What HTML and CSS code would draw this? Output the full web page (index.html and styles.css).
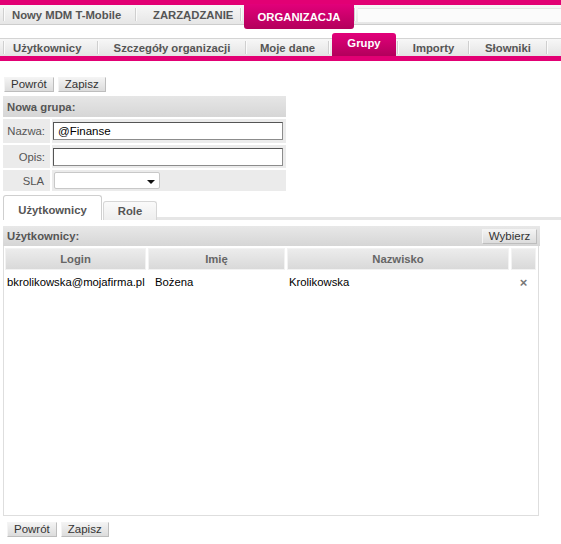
FILE: index.html
```html
<!DOCTYPE html>
<html lang="pl">
<head>
<meta charset="utf-8">
<title>Grupy</title>
<link rel="stylesheet" href="styles.css">
</head>
<body>
<div class="topline"></div>
<nav class="mainnav">
  <span class="sep"></span>
  <a class="mitem m1">Nowy MDM T-Mobile</a>
  <span class="sep"></span>
  <a class="mitem m2">ZARZĄDZANIE</a>
  <span class="sep"></span>
  <a class="mitem active m3">ORGANIZACJA</a>
  <span class="sep"></span>
  <span class="mrest"></span>
</nav>
<nav class="subnav">
  <span class="sep"></span>
  <a class="sitem s1">Użytkownicy</a>
  <span class="sep"></span>
  <a class="sitem s2">Szczegóły organizacji</a>
  <span class="sep"></span>
  <a class="sitem s3">Moje dane</a>
  <span class="sep"></span>
  <a class="sitem active s4">Grupy</a>
  <span class="sep"></span>
  <a class="sitem s5">Importy</a>
  <span class="sep"></span>
  <a class="sitem s6">Słowniki</a>
  <span class="sep"></span>
</nav>
<div class="pinkband"></div>

<main class="content">
  <div class="toolbar">
    <button class="btn">Powrót</button>
    <button class="btn">Zapisz</button>
  </div>

  <div class="form">
    <div class="form-head">Nowa grupa:</div>
    <div class="lbl">Nazwa:</div>
    <div class="fld"><input class="txt" type="text" value="@Finanse"></div>
    <div class="lbl">Opis:</div>
    <div class="fld"><input class="txt" type="text" value=""></div>
    <div class="lbl lbl-sla">SLA</div>
    <div class="fld fld-sla"><span class="select"><span class="arrow"></span></span></div>
  </div>

  <div class="tabs">
    <span class="tab tab-active">Użytkownicy</span>
    <span class="tab">Role</span>
    <span class="tabline"></span>
  </div>

  <div class="users">
    <div class="users-head">
      <span>Użytkownicy:</span>
      <button class="btn btn-small">Wybierz</button>
    </div>
    <div class="grid-box">
      <table class="grid">
        <thead>
          <tr>
            <th class="c-login">Login</th>
            <th class="c-imie">Imię</th>
            <th class="c-nazw">Nazwisko</th>
            <th class="c-x"></th>
          </tr>
        </thead>
        <tbody>
          <tr>
            <td>bkrolikowska@mojafirma.pl</td>
            <td class="pad-imie">Bożena</td>
            <td>Krolikowska</td>
            <td class="del">×</td>
          </tr>
        </tbody>
      </table>
    </div>
  </div>

  <div class="toolbar toolbar-bottom">
    <button class="btn">Powrót</button>
    <button class="btn">Zapisz</button>
  </div>
</main>
</body>
</html>
```

FILE: styles.css
```css
* { box-sizing: border-box; }
html, body { margin: 0; padding: 0; background: #fff; }
body {
  font-family: "Liberation Sans", Arial, sans-serif;
  font-size: 11.3px;
  color: #000;
  width: 561px;
  overflow: hidden;
}

.topline { height: 5px; background: #e20074; }

.sep {
  flex: none;
  width: 2px;
  height: 13px;
  border-left: 1px solid #cfcfcf;
  border-right: 1px solid #fbfbfb;
}

.mainnav {
  display: flex;
  align-items: center;
  height: 20px;
  padding-left: 3px;
  background: linear-gradient(#f7f7f7, #e6e6e6);
  border-bottom: 1px solid #cdcdcd;
}
.mitem {
  display: flex;
  align-items: center;
  justify-content: center;
  height: 19px;
  font-weight: bold;
  color: #555;
  white-space: nowrap;
}
.m1 { width: 130px; justify-content: flex-start; padding-left: 7px; }
.m2 { width: 103px; justify-content: flex-start; padding-left: 16px; }
.m3 { width: 110px; }
.mainnav .active {
  align-self: flex-start;
  height: 25px;
  margin-top: -1px;
  margin-left: 2px;
  background: linear-gradient(#e2007a, #b3005c);
  color: #fff;
  border-radius: 0 0 3px 3px;
  padding-top: 1px;
}
.mrest {
  flex: 1;
  height: 14px;
  margin-left: 2px;
  background: #fbfbfb;
  border-top: 1px solid #e6e6e6;
}

.subnav {
  display: flex;
  align-items: center;
  height: 18px;
  margin-top: 13px;
  padding-left: 3px;
  background: linear-gradient(#f7f7f7, #e4e4e4);
  border-top: 1px solid #d4d4d4;
}
.sitem {
  display: flex;
  align-items: center;
  justify-content: center;
  height: 17px;
  font-weight: bold;
  color: #555;
  white-space: nowrap;
}
.s1 { width: 92px; justify-content: flex-start; padding-left: 8px; }
.s2 { width: 146px; }
.s3 { width: 81px; }
.s4 { width: 64px; }
.s5 { width: 69px; }
.s6 { width: 76px; }
.subnav .active {
  align-self: flex-end;
  height: 23px;
  margin-top: -6px;
  margin-left: 2px;
  margin-right: 1px;
  background: linear-gradient(#e2007a, #b3005c);
  color: #fff;
  border-radius: 3px 3px 0 0;
  padding-bottom: 3px;
}
.pinkband { height: 5px; background: #e20074; }

.content { padding: 0 0 0 3px; }

.toolbar {
  display: flex;
  gap: 4px;
  margin-top: 16px;
  padding-left: 1px;
}
.btn {
  font-family: "Liberation Sans", Arial, sans-serif;
  font-size: 11.5px;
  color: #333;
  height: 15px;
  line-height: 13px;
  padding: 0 6px;
  margin: 0;
  border: 1px solid;
  border-color: #f4f4f4 #bdbdbd #bdbdbd #f4f4f4;
  background: linear-gradient(#f3f3f3, #dcdcdc);
  border-radius: 0;
}

.form {
  display: grid;
  grid-template-columns: 47px 234px;
  grid-template-rows: 21px 24px 23px 21px;
  column-gap: 2px;
  row-gap: 2px;
  margin-top: 4px;
  width: 283px;
}
.form-head {
  grid-column: 1 / 3;
  background: linear-gradient(#e6e6e6, #d6d6d6);
  font-weight: bold;
  color: #555;
  padding-left: 4px;
  display: flex;
  align-items: center;
}
.lbl {
  background: #ebebeb;
  color: #555;
  display: flex;
  align-items: center;
  justify-content: flex-end;
  padding-right: 5px;
}
.lbl-sla { padding-right: 6px; }
.fld {
  background: #ebebeb;
  display: flex;
  align-items: center;
  padding-left: 1px;
}
.txt {
  width: 230px;
  height: 18px;
  margin: 0;
  padding: 0 4px;
  border: 1px solid #6e6e6e;
  border-color: #555 #8c8c8c #8c8c8c #555;
  font-family: "Liberation Sans", Arial, sans-serif;
  font-size: 11.5px;
  color: #000;
  background: #fff;
}
.select {
  position: relative;
  display: block;
  width: 106px;
  height: 17px;
  margin-left: 1px;
  background: #fff;
  border: 1px solid #c8c8c8;
  border-radius: 2px;
}
.arrow {
  position: absolute;
  right: 4px;
  top: 7px;
  width: 0;
  height: 0;
  border-left: 4px solid transparent;
  border-right: 4px solid transparent;
  border-top: 4px solid #111;
}

.tabs {
  display: flex;
  align-items: flex-end;
  height: 27px;
  margin-top: 2px;
  margin-left: -3px;
  padding-left: 3px;
}
.tab {
  display: flex;
  align-items: center;
  justify-content: center;
  height: 19px;
  width: 54px;
  margin-left: 1px;
  font-weight: bold;
  color: #555;
  background: linear-gradient(#fafafa, #eeeeee);
  border: 1px solid #d6d6d6;
  border-bottom: 0;
  border-radius: 3px 3px 0 0;
  padding-bottom: 1px;
}
.tab-active {
  width: 99px;
  height: 25px;
  margin-left: 0;
  background: #fff;
  border-color: #cfcfcf;
  padding-top: 5px;
}
.tabline {
  flex: 1;
  height: 3px;
  margin-bottom: 0;
  background: #e6e6e6;
}

.users { margin-top: 6px; width: 537px; }
.users-head {
  display: flex;
  align-items: center;
  justify-content: space-between;
  height: 20px;
  padding: 0 3px 0 4px;
  background: linear-gradient(#e8e8e8, #d6d6d6);
  font-weight: bold;
  color: #555;
}
.btn-small { font-weight: normal; width: 55px; padding: 0; }

.grid-box {
  width: 536px;
  height: 270px;
  border: 1px solid #dedede;
  border-top: 0;
}
.grid {
  table-layout: fixed;
  border-collapse: separate;
  border-spacing: 2px;
  width: 535px;
  margin-left: -1px;
}
.grid th {
  height: 22px;
  padding: 0;
  background: linear-gradient(#ececec, #d9d9d9);
  border: 1px solid #f2f2f2;
  font-weight: bold;
  color: #666;
  text-align: center;
}
.c-login { width: 141px; }
.c-imie { width: 137px; }
.c-nazw { width: 222px; }
.c-x { width: 25px; }
.grid td {
  height: 20px;
  padding: 0 0 0 2px;
  color: #000;
  white-space: nowrap;
  overflow: visible;
}
.grid td.pad-imie { padding-left: 7px; }
.grid td.del {
  text-align: center;
  color: #777;
  font-weight: bold;
  font-size: 13px;
  padding-left: 0;
}

.toolbar-bottom { margin-top: 6px; padding-left: 4px; }
```
